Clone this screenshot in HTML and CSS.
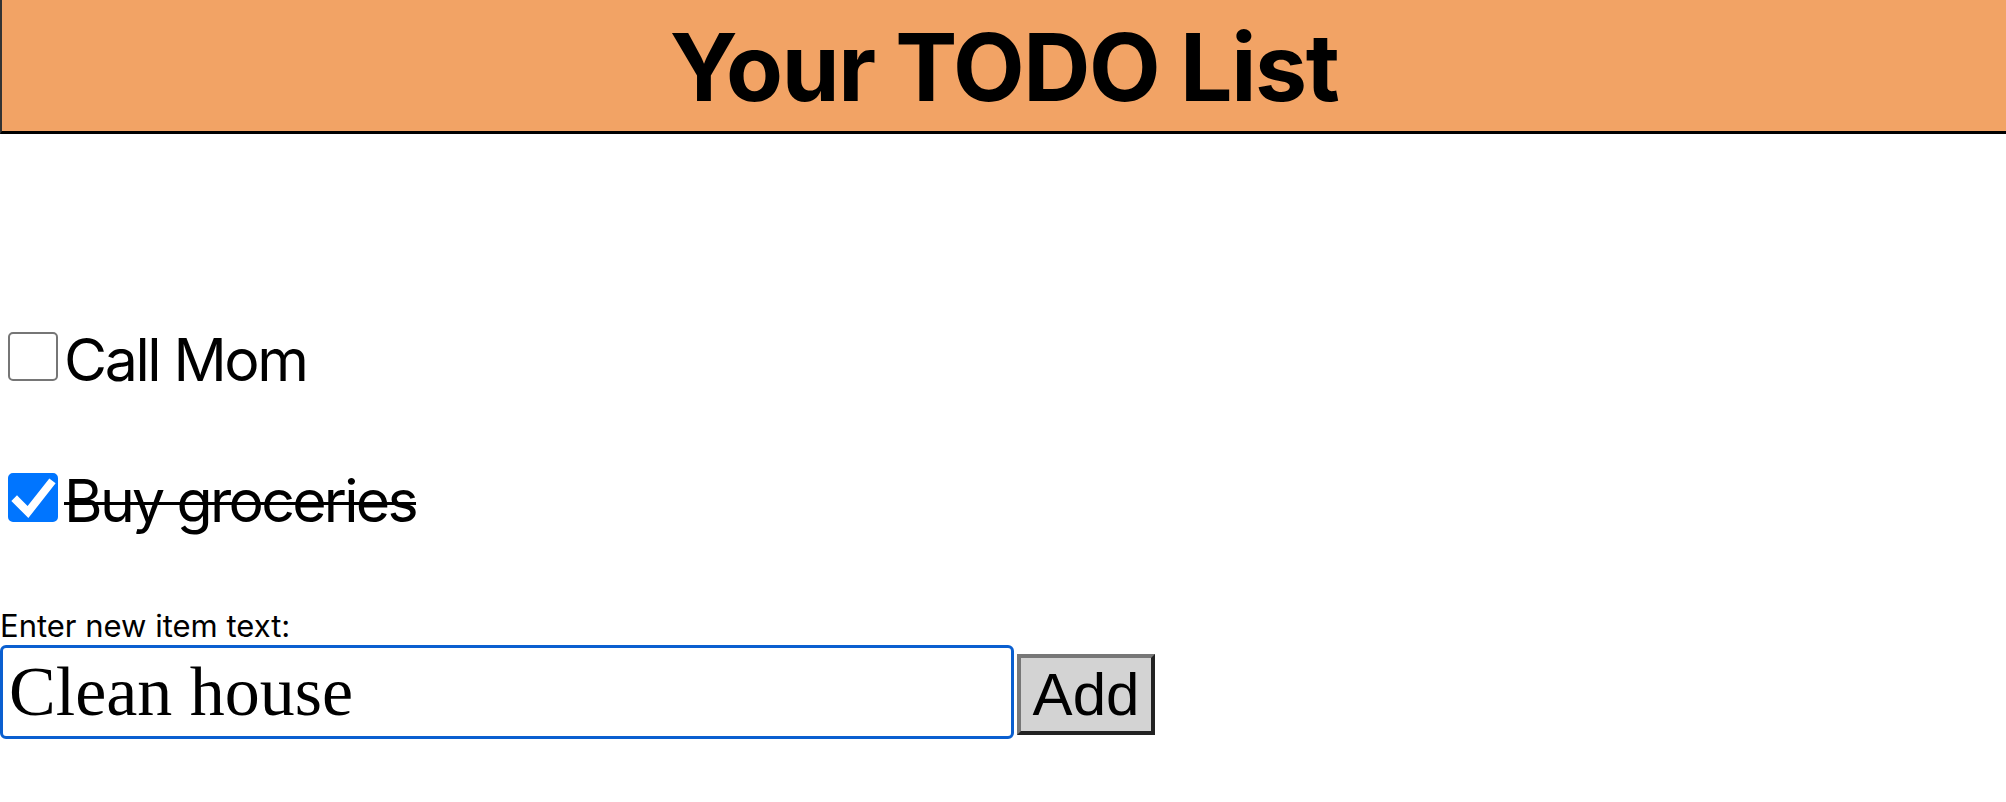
FILE: index.html
```html
<!DOCTYPE html>
<html lang="en">
<head>
<meta charset="utf-8">
<title>Your TODO List</title>
<link rel="stylesheet" href="styles.css">
</head>
<body>
<header class="banner">
  <h1 class="title">Your TODO List</h1>
</header>
<main class="content">
  <ul class="todo-list">
    <li class="todo-item">
      <label class="todo-label">
        <input type="checkbox" class="native">
        <span class="box"></span>
        <span class="todo-text">Call Mom</span>
      </label>
    </li>
    <li class="todo-item">
      <label class="todo-label">
        <input type="checkbox" class="native" checked>
        <span class="box box-checked">
          <svg class="tick" viewBox="0 0 50 49" width="50" height="49" aria-hidden="true">
            <path d="M9 28 L20 39 L42 11" fill="none" stroke="#fff" stroke-width="8" stroke-linecap="square" stroke-linejoin="miter"/>
          </svg>
        </span>
        <span class="todo-text done">Buy groceries</span>
      </label>
    </li>
  </ul>
  <form class="add-form">
    <label class="field-label" for="newItem">Enter new item text:</label>
    <div class="field-row">
      <input id="newItem" class="field-input" type="text" value="Clean house">
      <button type="button" class="add-button">Add</button>
    </div>
  </form>
</main>
</body>
</html>
```
FILE: styles.css
```css
html, body {
  margin: 0;
  padding: 0;
  background: #ffffff;
  color: #000000;
  font-family: "Inter", "Noto Sans", sans-serif;
}

.banner {
  height: 131px;
  background: #f2a365;
  border-left: 2px solid #333333;
  border-bottom: 3px solid #000000;
}

.title {
  margin: 0;
  text-align: center;
  font-family: "Inter", "Noto Sans", sans-serif;
  font-weight: 700;
  font-size: 93px;
  line-height: 134px;
  letter-spacing: -1.4px;
}

.content {
  display: flex;
  flex-direction: column;
}

.todo-list {
  list-style: none;
  margin: 198px 0 0 0;
  padding: 0;
  display: flex;
  flex-direction: column;
  gap: 86px;
}

.todo-item {
  display: block;
}

.todo-label {
  display: flex;
  align-items: flex-start;
}

.native {
  display: none;
}

.box {
  box-sizing: border-box;
  width: 50px;
  height: 49px;
  margin-left: 8px;
  margin-right: 6px;
  border: 2px solid #767676;
  border-radius: 5px;
  background: #ffffff;
  flex: none;
  position: relative;
}

.box-checked {
  border-color: #0075ff;
  background: #0075ff;
}

.tick {
  position: absolute;
  left: -2px;
  top: -2px;
}

.todo-text {
  font-size: 59px;
  line-height: 55px;
  letter-spacing: -2.4px;
  font-family: "Inter", "Noto Sans", sans-serif;
}

.done {
  letter-spacing: -2.7px;
  text-decoration: line-through;
  text-decoration-thickness: 3px;
}

.add-form {
  margin-top: 80px;
  display: flex;
  flex-direction: column;
}

.field-label {
  font-size: 31px;
  line-height: 36px;
  font-family: "Inter", "Noto Sans", sans-serif;
}

.field-row {
  margin-top: 1px;
  display: flex;
  align-items: flex-start;
}

.field-input {
  box-sizing: border-box;
  width: 1014px;
  height: 94px;
  margin: 0;
  padding: 0 0 0 6px;
  border: 3px solid #0a5fd0;
  border-radius: 6px;
  outline: none;
  background: #ffffff;
  font-family: "Liberation Serif", "Times New Roman", serif;
  font-size: 70px;
  color: #000000;
}

.add-button {
  box-sizing: border-box;
  margin: 9px 0 0 3px;
  width: 138px;
  height: 81px;
  padding: 0;
  background: #d3d3d3;
  border-style: solid;
  border-width: 4px;
  border-color: #777777 #222222 #222222 #777777;
  border-radius: 0;
  font-family: "Liberation Sans", Arial, sans-serif;
  font-size: 60px;
  line-height: 1;
  color: #000000;
}
```
